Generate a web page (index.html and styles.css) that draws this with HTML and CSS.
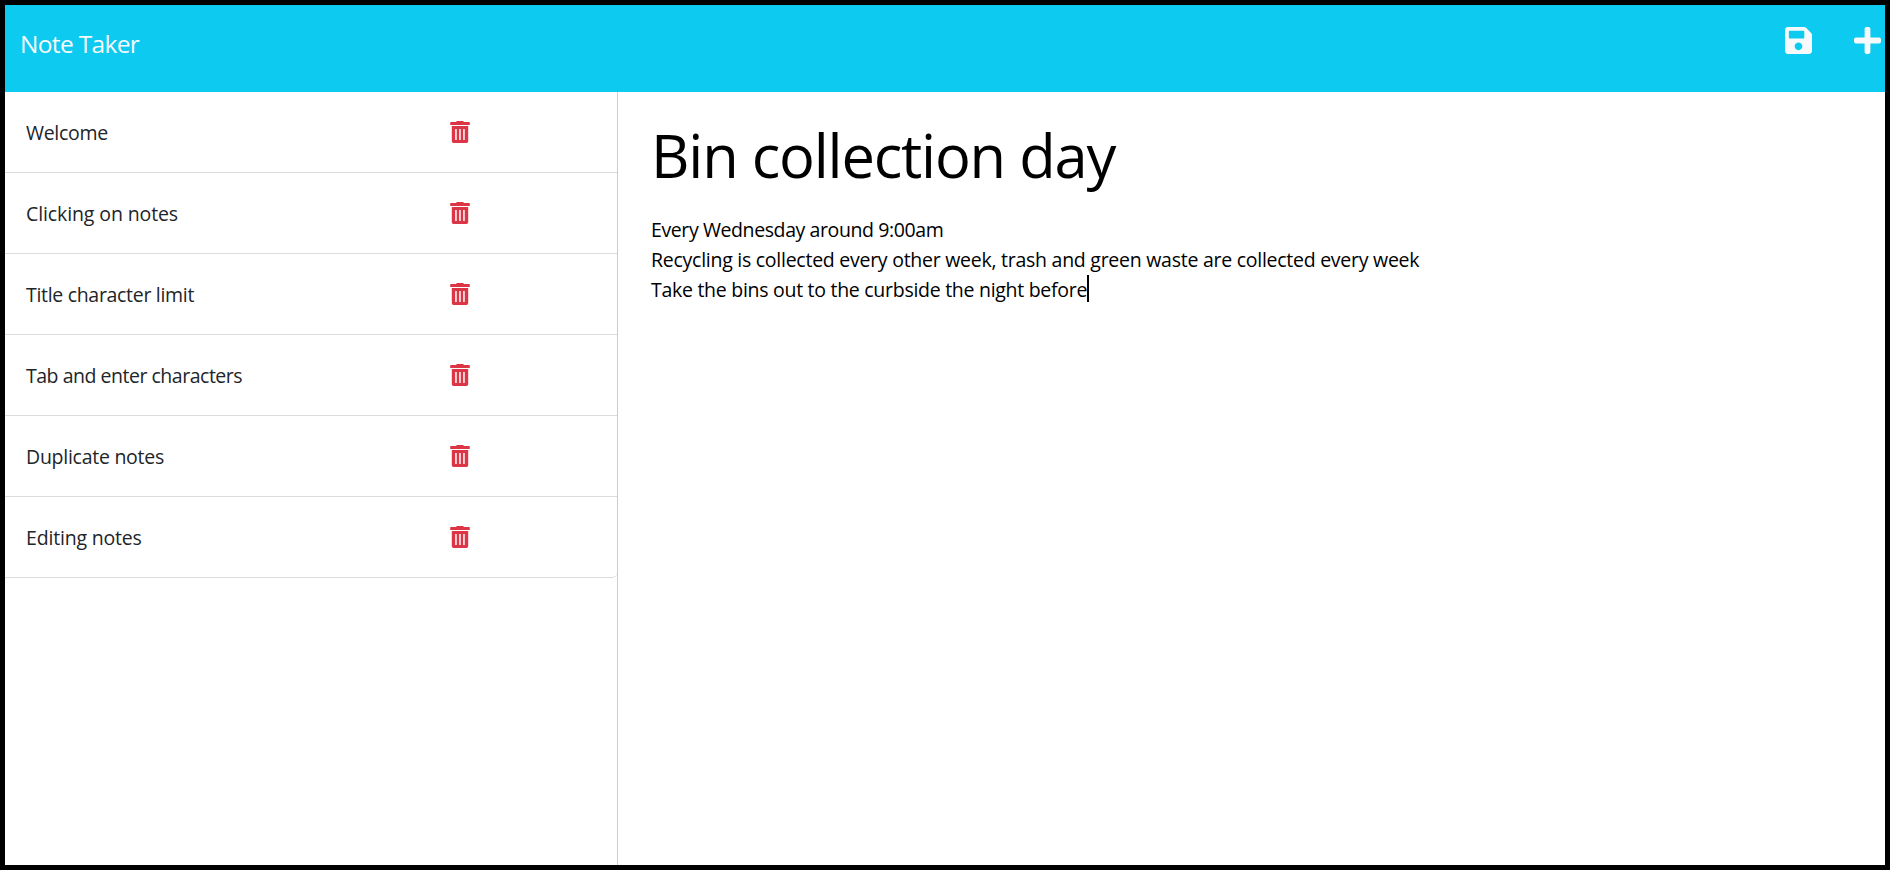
FILE: index.html
```html
<!DOCTYPE html>
<html lang="en">
<head>
<meta charset="utf-8">
<title>Note Taker</title>
<link rel="stylesheet" href="styles.css">
</head>
<body>
<svg class="sprite" width="0" height="0" aria-hidden="true">
  <symbol id="trash" viewBox="0 0 20 22" preserveAspectRatio="none">
    <path fill-rule="evenodd" d="M6.2 1 6.7 0H13.3L13.8 1H19.3Q19.8 1 19.8 1.6V3.4Q19.8 4 19.3 4H.7Q.2 4 .2 3.4V1.6Q.2 1 .7 1ZM1.8 4.9H18.2V20Q18.2 22 16.5 22H3.5Q1.8 22 1.8 20ZM5.2 8V19H6.7V8ZM9.2 8V19H10.7V8ZM13.2 8V19H14.7V8Z"/>
  </symbol>
</svg>
<div class="app">
  <header class="navbar">
    <a class="brand">Note Taker</a>
    <div class="actions">
      <svg class="action-icon" viewBox="0 32 448 448"><path d="M433.941 129.941l-83.882-83.882A48 48 0 0 0 316.118 32H48C21.49 32 0 53.49 0 80v352c0 26.51 21.49 48 48 48h352c26.51 0 48-21.49 48-48V163.882a48 48 0 0 0-14.059-33.941zM224 416c-35.346 0-64-28.654-64-64 0-35.346 28.654-64 64-64s64 28.654 64 64c0 35.346-28.654 64-64 64zm96-304.52V212c0 6.627-5.373 12-12 12H76c-6.627 0-12-5.373-12-12V108c0-6.627 5.373-12 12-12h228.52c3.183 0 6.235 1.264 8.485 3.515l3.48 3.48A11.996 11.996 0 0 1 320 111.48z"/></svg>
      <svg class="action-icon" viewBox="0 32 448 448"><path d="M416 208H272V64c0-17.67-14.33-32-32-32h-32c-17.67 0-32 14.33-32 32v144H32c-17.67 0-32 14.33-32 32v32c0 17.67 14.33 32 32 32h144v144c0 17.67 14.33 32 32 32h32c17.67 0 32-14.33 32-32V304h144c17.67 0 32-14.33 32-32v-32c0-17.67-14.33-32-32-32z"/></svg>
    </div>
  </header>
  <main class="columns">
    <nav class="sidebar">
      <ul class="notes">
        <li class="note"><span class="note-title welcome">Welcome</span><svg class="delete"><use href="#trash"/></svg></li>
        <li class="note"><span class="note-title clicking">Clicking on notes</span><svg class="delete"><use href="#trash"/></svg></li>
        <li class="note"><span class="note-title limit">Title character limit</span><svg class="delete"><use href="#trash"/></svg></li>
        <li class="note"><span class="note-title tabs">Tab and enter characters</span><svg class="delete"><use href="#trash"/></svg></li>
        <li class="note"><span class="note-title duplicate">Duplicate notes</span><svg class="delete"><use href="#trash"/></svg></li>
        <li class="note"><span class="note-title editing">Editing notes</span><svg class="delete"><use href="#trash"/></svg></li>
      </ul>
    </nav>
    <section class="editor">
      <h1 class="title">Bin collection day</h1>
      <div class="body">
        <p class="line line-one">Every Wednesday around 9:00am</p>
        <p class="line line-two">Recycling is collected every other week, trash and green waste are collected every week</p>
        <p class="line line-three">Take the bins out to the curbside the night before<span class="caret"></span></p>
      </div>
    </section>
  </main>
</div>
</body>
</html>
```
FILE: styles.css
```css
* { box-sizing: border-box; }
body {
  margin: 0;
  font-family: "Open Sans", "Noto Sans", sans-serif;
  font-size: 19.5px;
  color: #212529;
}
.sprite { display: block; }
.app {
  display: flex;
  flex-direction: column;
  height: 870px;
  border: 5px solid #000;
  background: #fff;
}
.navbar {
  display: flex;
  justify-content: space-between;
  align-items: flex-start;
  height: 87px;
  padding: 22px 4px 0 15px;
  background: #0dcaf0;
  color: #f8f9fa;
}
.brand { font-size: 24.5px; line-height: 34px; letter-spacing: -0.66px; }
.actions { display: flex; gap: 42px; }
.action-icon { width: 27px; height: 27px; fill: #f8f9fa; }
.columns { display: flex; flex: 1; }
.sidebar { width: 613px; border-right: 1px solid #ccc; }
.notes { margin: 0; padding: 0; list-style: none; }
.note {
  display: flex;
  align-items: flex-start;
  height: 81px;
  padding: 25px 0 0 21px;
  border-bottom: 1px solid #dcdcdc;
}
.note:last-child { border-bottom-right-radius: 5px; }
.note-title { width: 424px; line-height: 32px; white-space: nowrap; }
.welcome { letter-spacing: -0.3px; }
.clicking { letter-spacing: -0.11px; }
.limit { letter-spacing: -0.31px; }
.tabs { letter-spacing: -0.48px; }
.duplicate { letter-spacing: -0.26px; }
.editing { letter-spacing: -0.18px; }
.delete { width: 20px; height: 22px; margin-top: 4px; fill: #dc3545; }
.editor { flex: 1; padding: 23px 0 0 33px; color: #000; }
.title { margin: 0; font-size: 59.6px; font-weight: 400; line-height: 80px; letter-spacing: -1.2px; }
.body { padding-top: 20px; }
.line { margin: 0; line-height: 30px; white-space: nowrap; display: flex; }
.line-one { letter-spacing: -0.4px; }
.line-two { letter-spacing: -0.26px; }
.line-three { letter-spacing: -0.28px; }
.caret { width: 2px; height: 27px; background: #000; }
```
